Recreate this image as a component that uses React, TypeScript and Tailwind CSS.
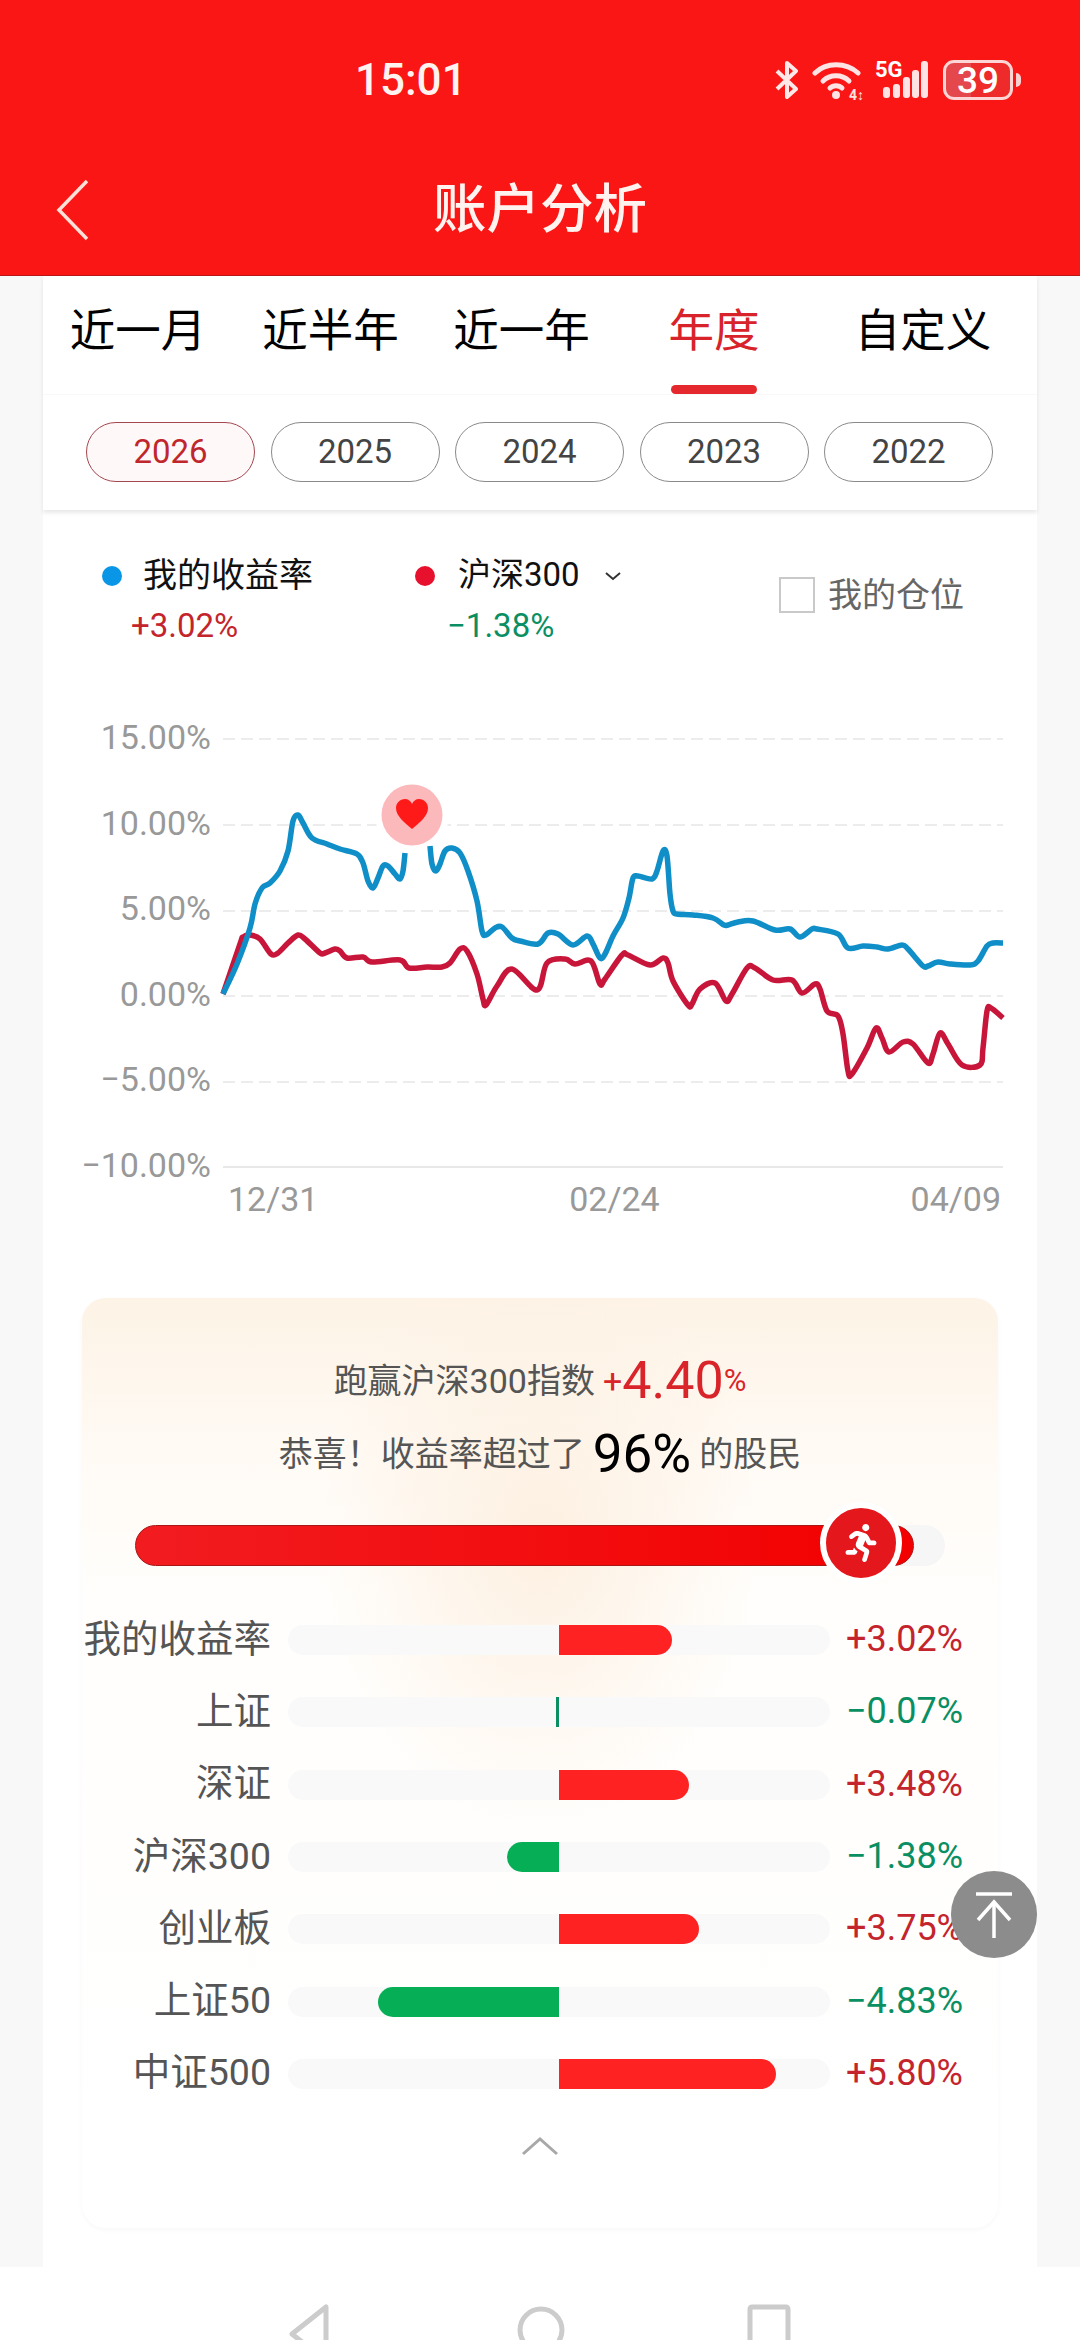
import { FaRunning } from 'react-icons/fa';

type Point = [number, number];

const blueA: Point[] = [
  [223, 993], [237, 963], [250, 927], [255, 903], [262, 887], [270, 882], [280, 870], [288, 850], [293, 820],
  [298, 814], [303, 822], [312, 837], [327, 843], [340, 848], [357, 853], [363, 862], [368, 880], [373, 887],
  [378, 877], [383, 865], [388, 865], [395, 873], [400, 878], [403, 870], [405, 852],
];
const blueB: Point[] = [
  [430, 845], [432, 863], [436, 870], [440, 863], [445, 850], [452, 847], [460, 852], [468, 870], [477, 900],
  [482, 930], [486, 934], [495, 927], [502, 926], [512, 937], [520, 940], [538, 943], [548, 932], [558, 933],
  [573, 944], [587, 935], [593, 943], [600, 957], [605, 953], [613, 935], [623, 917], [629, 897], [633, 877],
  [638, 875], [652, 878], [657, 870], [663, 850], [667, 855], [670, 893], [673, 910], [677, 913], [693, 914],
  [713, 917], [724, 924], [728, 924], [738, 921], [753, 920], [775, 929], [790, 928], [800, 936], [812, 928],
  [817, 928], [838, 933], [848, 947], [863, 945], [877, 946], [888, 948], [902, 944], [908, 948], [923, 965],
  [928, 965], [938, 961], [950, 963], [970, 964], [978, 960], [987, 945], [993, 942], [1003, 942],
];
const red: Point[] = [
  [223, 993], [240, 943], [243, 936], [250, 934], [260, 938], [271, 953], [278, 952], [288, 942], [298, 934],
  [305, 938], [320, 952], [325, 952], [335, 948], [340, 950], [347, 957], [363, 956], [372, 961], [400, 959],
  [409, 967], [427, 966], [442, 966], [450, 962], [460, 948], [467, 950], [477, 973], [483, 998], [486, 1004],
  [497, 985], [512, 968], [537, 989], [547, 962], [565, 958], [575, 963], [591, 960], [600, 983], [605, 978],
  [622, 954], [628, 954], [650, 964], [663, 957], [668, 962], [673, 980], [688, 1004], [692, 1003], [700, 988],
  [715, 982], [726, 1000], [732, 993], [747, 967], [755, 967], [773, 979], [792, 979], [802, 992], [815, 983],
  [820, 988], [827, 1010], [838, 1015], [843, 1033], [848, 1070], [852, 1073], [867, 1047], [876, 1027], [882, 1037],
  [889, 1051], [903, 1041], [913, 1043], [928, 1062], [933, 1053], [940, 1032], [948, 1043], [962, 1064], [980, 1064],
  [983, 1047], [987, 1010], [991, 1007], [1003, 1017],
];

// smooth line through the sampled points
function smooth(pts: Point[]) {
  let d = `M${pts[0][0]} ${pts[0][1]}`;
  for (let i = 0; i < pts.length - 1; i++) {
    const p0 = pts[Math.max(i - 1, 0)];
    const p1 = pts[i];
    const p2 = pts[i + 1];
    const p3 = pts[Math.min(i + 2, pts.length - 1)];
    const c1x = p1[0] + (p2[0] - p0[0]) / 6;
    const c1y = p1[1] + (p2[1] - p0[1]) / 6;
    const c2x = p2[0] - (p3[0] - p1[0]) / 6;
    const c2y = p2[1] - (p3[1] - p1[1]) / 6;
    d += ` C${c1x} ${c1y} ${c2x} ${c2y} ${p2[0]} ${p2[1]}`;
  }
  return d;
}

const tabs = [
  { label: '近一月', width: 'w-[190px]' },
  { label: '近半年', width: 'w-[195px]' },
  { label: '近一年', width: 'w-[187px]' },
  { label: '年度', width: 'w-[198px]', active: true },
  { label: '自定义', width: 'w-[220px]' },
];

const years = ['2026', '2025', '2024', '2023', '2022'];
const yTicks = ['15.00%', '10.00%', '5.00%', '0.00%', '−5.00%', '−10.00%'];

const rows = [
  { name: '我的收益率', value: 3.02 },
  { name: '上证', value: -0.07 },
  { name: '深证', value: 3.48 },
  { name: '沪深300', value: -1.38 },
  { name: '创业板', value: 3.75 },
  { name: '上证50', value: -4.83 },
  { name: '中证500', value: 5.8 },
];

function StatusIcons() {
  return (
    <div className="flex items-center">
      <svg width="24" height="40" viewBox="0 0 24 40" fill="none" stroke="#fff" strokeWidth="4" className="opacity-90">
        <path d="M2 11 L21 29 L12 37 V3 L21 11 L2 29" strokeLinejoin="round" />
      </svg>
      <div className="relative ml-[13px] h-[40px] w-[50px]">
        <svg width="50" height="40" viewBox="0 0 50 40" fill="none" stroke="#fde3e3" strokeWidth="5" strokeLinecap="round">
          <path d="M3 13 C14 2 34 2 46 13" />
          <path d="M11 21 C18 14 30 14 37 21" />
          <path d="M18 28 C21 25 27 25 30 28" />
          <circle cx="24" cy="35" r="4" fill="#fde3e3" stroke="none" />
        </svg>
        <span className="absolute bottom-[-2px] right-[-2px] font-['Roboto'] text-[14px] font-bold leading-[14px] text-[#fde3e3]">4↕</span>
      </div>
      <div className="relative ml-[13px] h-[40px] w-[53px]">
        <span className="absolute left-0 top-[-1px] font-['Roboto'] text-[22px] font-bold leading-[22px] text-white">5G</span>
        <svg width="53" height="40" viewBox="0 0 53 40" fill="#fde3e3">
          <rect x="8" y="27" width="7" height="11" rx="3" />
          <rect x="18" y="24" width="7" height="14" rx="3" />
          <rect x="28" y="17" width="7" height="21" rx="3" />
          <rect x="37" y="10" width="7" height="28" rx="3" />
          <rect x="46" y="1" width="7" height="37" rx="3" />
        </svg>
      </div>
      <div className="ml-[15px] flex h-[40px] w-[70px] items-center justify-center rounded-[11px] border-[3px] border-[#fdd5d5] bg-[linear-gradient(90deg,#e4484c_0%,#e4484c_39%,#ee2a2a_39%,#ee2a2a_100%)]">
        <span className="font-['Roboto'] text-[37px] font-medium leading-none text-white">39</span>
      </div>
      <div className="ml-[3px] h-[14px] w-[5px] rounded-r-full bg-[#fbd0d0]" />
    </div>
  );
}

function Chart() {
  return (
    <svg width="827" height="460" viewBox="210 718 827 460" fill="none" className="shrink-0 overflow-visible">
      {[738, 824, 910, 995, 1081].map((y) => (
        <line key={y} x1="223" x2="1003" y1={y} y2={y} stroke="#ececec" strokeWidth="2" strokeDasharray="12 6" />
      ))}
      <line x1="223" x2="1003" y1="1166" y2="1166" stroke="#e8e8e8" strokeWidth="2" />
      <circle cx="412" cy="814" r="37" fill="#fff" />
      <path d={smooth(red)} stroke="#c8153a" strokeWidth="5.5" strokeLinejoin="round" />
      <path d={smooth(blueA)} stroke="#0f8ec7" strokeWidth="5.5" strokeLinejoin="round" />
      <path d={smooth(blueB)} stroke="#0f8ec7" strokeWidth="5.5" strokeLinejoin="round" />
      <circle cx="412" cy="814" r="30.5" fill="#fcb9bc" />
      <path
        d="M412 828 C404 821 396 815 396 807 C396 802 400 798 405 798 C408 798 411 800 412 803 C413 800 416 798 419 798 C424 798 428 802 428 807 C428 815 420 821 412 828Z"
        fill="#ff1a1a"
      />
    </svg>
  );
}

function CompareRow({ name, value }: { name: string; value: number }) {
  const up = value > 0;
  const width = Math.max(Math.abs(value) * 37.4, 3);
  const text = `${up ? '+' : '−'}${Math.abs(value).toFixed(2)}%`;
  return (
    <div className="flex h-[72.3px] items-center">
      <div className="w-[189px] whitespace-nowrap pb-[3px] text-right text-[37.5px] leading-[44px] text-[#555555]">{name}</div>
      <div className="ml-[17px] flex h-[30px] w-[542px] overflow-hidden rounded-full bg-[#f9f9f9]">
        <div className="flex w-[271px] justify-end">
          {!up && (
            <div
              className={Math.abs(value) < 0.5 ? 'h-full bg-[#0a8f63]' : 'h-full rounded-l-full bg-[#06ae56]'}
              style={{ width }}
            />
          )}
        </div>
        <div className="flex w-[271px]">
          {up && <div className="h-full rounded-r-full bg-[#ff2222]" style={{ width }} />}
        </div>
      </div>
      <div className={up ? 'ml-[16px] pb-[2px] text-[36px] leading-[44px] text-[#c4242c]' : 'ml-[16px] pb-[2px] text-[36px] leading-[44px] text-[#0a8f63]'}>
        {text}
      </div>
    </div>
  );
}

export default function App() {
  return (
    <div className="relative h-[2340px] w-[1080px] overflow-hidden bg-[#f8f8f8] font-['Roboto','Noto_Sans_CJK_SC',sans-serif]">
      {/* Header */}
      <div className="h-[276px] border-b border-[#b81818] bg-[#fb1616]">
        <div className="flex h-[160px] items-center pl-[355px] pr-[59px]">
          <span className="text-[44px] font-medium leading-none text-[#fff3f0]">15:01</span>
          <div className="ml-auto">
            <StatusIcons />
          </div>
        </div>
        <div className="grid h-[100px] grid-cols-[100px_1fr_100px] items-center">
          <svg width="34" height="62" viewBox="0 0 34 62" fill="none" stroke="#fde0d8" strokeWidth="3.5" className="ml-[56px]">
            <path d="M31 2 L3 31 L31 60" />
          </svg>
          <div className="text-center text-[53.5px] font-medium leading-[70px] text-[#fff3f0]">账户分析</div>
        </div>
      </div>

      {/* Range card */}
      <div className="relative z-10 mx-[43px] bg-white shadow-[0_3px_4px_rgba(0,0,0,0.09)]">
        <div className="flex h-[119px] border-b border-[#f8f8f8]">
          {tabs.map((tab) => (
            <div key={tab.label} className={`${tab.width} flex flex-col items-center pt-[30px]`}>
              <span className={tab.active ? 'text-[45.5px] leading-[52px] text-[#d8232a]' : 'text-[45.5px] leading-[52px] text-black'}>
                {tab.label}
              </span>
              {tab.active && <div className="mt-[27px] h-[9px] w-[86px] rounded-full bg-[#e5282e]" />}
            </div>
          ))}
        </div>
        <div className="flex gap-[15.5px] pb-[28px] pl-[43px] pt-[27px]">
          {years.map((year, i) => (
            <div
              key={year}
              className={
                i === 0
                  ? 'flex h-[60px] w-[169px] items-center justify-center rounded-[30px] border border-[#a5474f] bg-[#fff8f8] text-[33px] text-[#c0272d]'
                  : 'flex h-[60px] w-[169px] items-center justify-center rounded-[30px] border border-[#8a8a8a] text-[33px] text-[#444444]'
              }
            >
              {year}
            </div>
          ))}
        </div>
      </div>

      {/* Main card */}
      <div className="mx-[43px] h-[1757px] bg-white">
        {/* Legend */}
        <div className="flex pl-[59px] pt-[42px]">
          <div className="w-[313px]">
            <div className="flex h-[48px] items-center">
              <span className="h-[20px] w-[20px] rounded-full bg-[#0a96e6]" />
              <span className="ml-[21px] pb-[2px] text-[34px] leading-[48px] text-[#111111]">我的收益率</span>
            </div>
            <div className="mt-[2px] pl-[29px] text-[33px] leading-[48px] text-[#c4242c]">+3.02%</div>
          </div>
          <div className="w-[364px]">
            <div className="flex h-[48px] items-center">
              <span className="h-[20px] w-[20px] rounded-full bg-[#e8112d]" />
              <span className="ml-[23px] pb-[2px] text-[33px] leading-[48px] text-[#111111]">沪深300</span>
              <svg width="18" height="10" viewBox="0 0 18 10" fill="none" stroke="#333333" strokeWidth="2" className="ml-[24px]">
                <path d="M2 2 L9 8 L16 2" />
              </svg>
            </div>
            <div className="mt-[2px] pl-[32px] text-[33px] leading-[48px] text-[#0a8f63]">−1.38%</div>
          </div>
          <div className="mt-[25px] flex h-[36px] items-center">
            <span className="h-[36px] w-[36px] border-2 border-[#c9c9c9] bg-white" />
            <span className="ml-[13px] text-[34px] leading-[44px] text-[#666666]">我的仓位</span>
          </div>
        </div>

        {/* Chart */}
        <div className="mt-[69px] flex h-[460px]">
          <div className="flex w-[168px] shrink-0 flex-col gap-[45.6px] text-right">
            {yTicks.map((tick) => (
              <div key={tick} className="h-[40px] -translate-y-[2px] text-[34px] leading-[40px] text-[#999999]">
                {tick}
              </div>
            ))}
          </div>
          <div className="-ml-px">
            <Chart />
          </div>
        </div>
        <div className="ml-[185px] flex h-[40px] w-[773px] justify-between text-[34px] leading-[40px] text-[#999999]">
          <span>12/31</span>
          <span>02/24</span>
          <span>04/09</span>
        </div>

        {/* Beat the index */}
        <div className="ml-[39px] mt-[79px] h-[930px] w-[916px] rounded-[24px] bg-[radial-gradient(ellipse_220px_300px_at_50%_240px,#fdf0e1_0%,rgba(255,255,255,0)_100%),linear-gradient(180deg,#fdf3e6_0%,#fffaf4_16%,#fffefc_32%,#ffffff_100%)] pt-[53px] shadow-[0_2px_5px_rgba(0,0,0,0.03)]">
          <div className="flex h-[60px] items-center justify-center text-[34px] text-[#555555]">
            <span>跑赢沪深300指数</span>
            <span className="ml-[8px] text-[34px] text-[#d9252a]">+</span>
            <span className="text-[52px] text-[#d9252a]">4.40</span>
            <span className="text-[31px] text-[#d9252a]">%</span>
          </div>
          <div className="mt-[13px] flex h-[60px] items-center justify-center text-[34px] text-[#555555]">
            <span>恭喜！收益率超过了</span>
            <span className="mx-[8px] text-[53px] leading-[60px] text-black">96%</span>
            <span>的股民</span>
          </div>

          <div className="relative ml-[53px] mt-[41px] h-[41px] w-[810px] rounded-full bg-[#f6f6f6]">
            <div className="h-full w-[779px] rounded-full border border-[#a81616] bg-[linear-gradient(90deg,#f21c20_0%,#f30000_100%)]" />
            <div className="absolute left-[685px] top-[-23px] flex h-[82px] w-[82px] items-center justify-center rounded-full border-[6px] border-white bg-[#e3171c]">
              <FaRunning size={38} color="#ffffff" />
            </div>
          </div>

          <div className="mt-[38px]">
            {rows.map((row) => (
              <CompareRow key={row.name} name={row.name} value={row.value} />
            ))}
          </div>

          <svg width="38" height="20" viewBox="0 0 38 20" fill="none" stroke="#a8a8a8" strokeWidth="3" className="mx-auto mt-[26px]">
            <path d="M2 18 L19 3 L36 18" />
          </svg>
        </div>
      </div>

      {/* Bottom nav */}
      <div className="flex h-[73px] bg-white pt-[37px]">
        <svg width="42" height="60" viewBox="0 0 42 60" fill="none" stroke="#cccccc" strokeWidth="5" className="ml-[288px]">
          <path d="M38 3 V57 L4 30 Z" strokeLinejoin="round" />
        </svg>
        <svg width="48" height="60" viewBox="0 0 48 60" fill="none" stroke="#cccccc" strokeWidth="5" className="ml-[187px]">
          <circle cx="24" cy="26" r="21" />
        </svg>
        <svg width="44" height="60" viewBox="0 0 44 60" fill="none" stroke="#cccccc" strokeWidth="5" className="ml-[182px]">
          <rect x="3" y="3" width="38" height="54" rx="2" />
        </svg>
      </div>

      {/* Scroll to top */}
      <div className="absolute left-[951px] top-[1871px] flex h-[87px] w-[86px] items-center justify-center rounded-full bg-[#8c8c8c]">
        <svg width="40" height="48" viewBox="0 0 40 48" fill="none" stroke="#ffffff" strokeWidth="3.5">
          <path d="M2 3 H38" />
          <path d="M20 47 V11" />
          <path d="M4 29 L20 11 L36 29" />
        </svg>
      </div>
    </div>
  );
}
